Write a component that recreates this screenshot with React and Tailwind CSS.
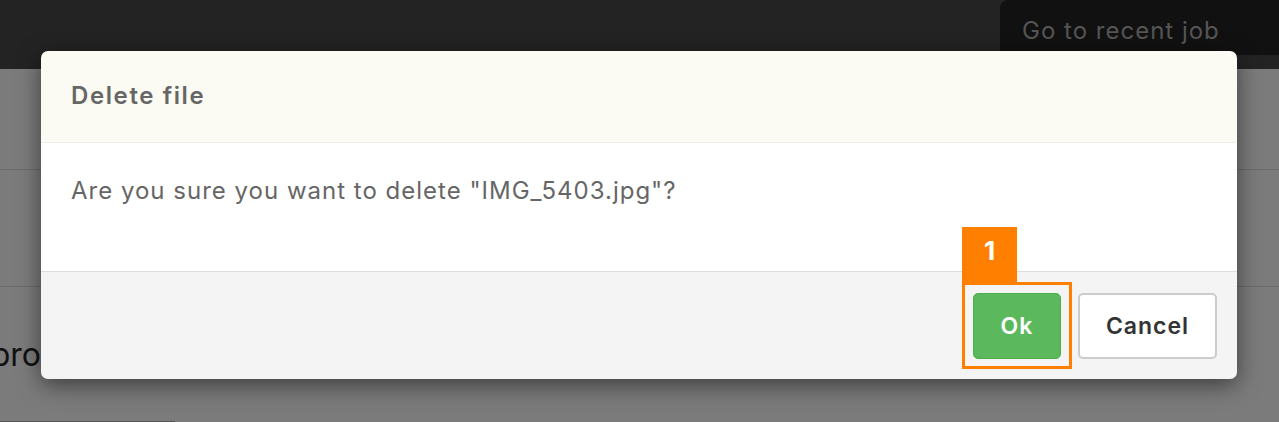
export default function App() {
  const font = { fontFamily: '"Inter", "Open Sans", sans-serif' };
  return (
    <div className="relative w-[1279px] h-[422px] overflow-hidden bg-[#7b7b7b]" style={font}>
      {/* top bar */}
      <div className="h-[69px] bg-[#232323] flex justify-end">
        <div className="w-[279px] h-[55px] bg-[#111111] rounded-tl-[8px] pl-[22px] pt-[14px] text-[24px] tracking-[1px] text-[#555555] leading-[34px] whitespace-nowrap">
          Go to recent job
        </div>
      </div>
      {/* background content */}
      <div className="h-[101px] border-b border-[#6b6b6b]"></div>
      <div className="h-[117px] border-b border-[#6b6b6b]"></div>
      <div className="h-[134px] pt-[50px]">
        <div className="w-[41px] flex justify-end">
          <span className="text-[32px] text-[#111] leading-[36px] whitespace-nowrap">pro</span>
        </div>
      </div>
      <div className="w-[175px] h-[1px] bg-[#555]"></div>

      {/* modal */}
      <div className="absolute left-[41px] top-[51px] w-[1196px] h-[328px] rounded-[7px] overflow-hidden flex flex-col shadow-[0_6px_22px_rgba(0,0,0,0.5)]">
        <div className="h-[92px] bg-[#fbfbf3] border-b border-[#eeeeea] flex items-center pl-[30px] pb-[2px]">
          <span className="text-[24px] font-semibold tracking-[1.6px] text-[#666666]">Delete file</span>
        </div>
        <div className="h-[129px] bg-white border-b border-[#dddddd] pl-[30px] pt-[33px]">
          <span className="text-[24px] tracking-[1px] text-[#666666] leading-[30px] whitespace-nowrap">Are you sure you want to delete "IMG_5403.jpg"?</span>
        </div>
        <div className="flex-1 bg-[#f4f4f4] flex justify-end items-start pt-[21px] pr-[20px] gap-[17px]">
          <button className="w-[88px] h-[66px] rounded-[5px] bg-[#5cb85c] border border-[#4cae4c] text-white text-[23px] tracking-[1px] font-semibold">Ok</button>
          <button className="w-[139px] h-[66px] rounded-[5px] bg-white border-2 border-[#cccccc] text-[#333333] text-[23px] tracking-[1px] font-semibold">Cancel</button>
        </div>
      </div>

      {/* highlight */}
      <div className="absolute left-[962px] top-[282px] w-[110px] h-[87px] border-[3px] border-[#ff7f00]"></div>
      <div className="absolute left-[962px] top-[227px] w-[55px] h-[56px] bg-[#ff7f00] flex items-center justify-center text-white text-[26px] font-bold leading-none pb-[8px]">1</div>
    </div>
  );
}
